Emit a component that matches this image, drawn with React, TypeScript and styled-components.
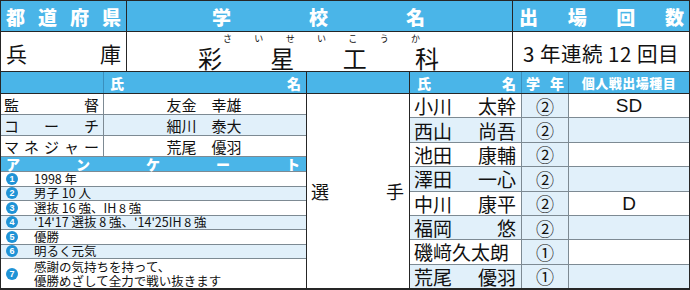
import * as React from "react";
import styled, {createGlobalStyle} from "styled-components";

const BLUE = "#4ab5e8";
const PALE = "#e1f0fa";
const LINE = "#7d8a93";
const DARK = "#262626";

const GlobalStyle = createGlobalStyle`
  html, body { margin: 0; padding: 0; background: #fff; }
  body { font-family: "Noto Sans CJK JP", "Noto Sans", sans-serif; color: #111; }
`

const Sheet = styled.div`
  width: 690px;
  height: 290px;
  box-sizing: border-box;
  border: 1px solid ${DARK};
  border-bottom-width: 2px;
  display: flex;
  flex-direction: column;
  overflow: hidden;
`

const TopRow = styled.div<{h:number, blue?:boolean}>`
  display: grid;
  grid-template-columns: 125px 386px 1fr;
  height: ${p=>p.h}px;
  flex-shrink: 0;
  background: ${p=>p.blue ? BLUE : "#fff"};
  border-bottom: 1px solid ${DARK};
  & > * + * { border-left: 1px solid ${DARK}; }
`

const Spread = styled.div<{pad:string, size:number, bold?:boolean, white?:boolean}>`
  display: flex;
  justify-content: space-between;
  align-items: center;
  padding: ${p=>p.pad};
  font-size: ${p=>p.size}px;
  font-weight: ${p=>p.bold ? 900 : 400};
  color: ${p=>p.white ? "#fff" : "#111"};
  line-height: 1;
  min-width: 0;
  min-height: 0;
`

const SchoolCell = styled.div`
  display: flex;
  flex-direction: column;
`

const Kana = styled(Spread)`
  height: 9px;
  padding-top: 2px;
`

const CountCell = styled.div`
  display: flex;
  align-items: center;
  justify-content: center;
  font-size: 20.5px;
  line-height: 1;
  padding-top: 2px;
  letter-spacing: 0.5px;
`

const Bottom = styled.div`
  flex: 1;
  display: grid;
  grid-template-columns: 305px 103px 1fr;
  grid-template-rows: 100%;
  min-height: 0;
  & > * + * { border-left: 1px solid ${DARK}; }
`

const Column = styled.div`
  display: flex;
  flex-direction: column;
  min-height: 0;
`

const StaffGrid = styled.div<{blue?:boolean, pale?:boolean}>`
  display: grid;
  grid-template-columns: 102px 1fr;
  height: ${p=>p.blue ? 22 : 21}px;
  flex-shrink: 0;
  background: ${p=>p.blue ? BLUE : p.pale ? PALE : "#fff"};
  border-bottom: 1px solid ${p=>p.blue ? DARK : LINE};
  box-sizing: border-box;
  & > * + * { border-left: 1px solid ${p=>p.blue ? "#3a8fbd" : LINE}; }
`

const StaffName = styled.div`
  display: flex;
  align-items: center;
  justify-content: center;
  font-size: 15px;
  line-height: 1;
  padding-right: 2px;
`

const SurveyHead = styled(Spread)`
  height: 15px;
  flex-shrink: 0;
  background: ${BLUE};
  border-bottom: 1px solid ${LINE};
  box-sizing: border-box;
`

const Item = styled.div<{h?:number, pale?:boolean}>`
  display: flex;
  align-items: center;
  flex: ${p=>p.h ? "1" : "none"};
  height: ${p=>p.h ? "auto" : "14.5px"};
  background: ${p=>p.pale ? PALE : "#fff"};
  border-bottom: 1px solid ${LINE};
  box-sizing: border-box;
  font-size: 12.5px;
  line-height: 14px;
  &:last-child { border-bottom: none; }
`

const Num = styled.span`
  width: 12px;
  height: 12px;
  border-radius: 50%;
  background: #1f93d6;
  color: #fff;
  font-size: 9px;
  font-weight: 900;
  font-family: "Liberation Sans", sans-serif;
  display: flex;
  align-items: center;
  justify-content: center;
  margin: 0 16px 0 5px;
  flex-shrink: 0;
`

const HeadBlank = styled.div`
  height: 22px;
  flex-shrink: 0;
  background: ${BLUE};
  border-bottom: 1px solid ${DARK};
  box-sizing: border-box;
`

const PlayerLabel = styled(Spread)`
  flex: 1;
  padding: 0 5px 0 4px;
`

const RosterRow = styled.div<{blue?:boolean, pale?:boolean}>`
  display: grid;
  grid-template-columns: 111px 47px 1fr;
  flex: ${p=>p.blue ? "none" : "1 1 0"};
  height: ${p=>p.blue ? "22px" : "auto"};
  min-height: 0;
  background: ${p=>p.blue ? BLUE : p.pale ? PALE : "#fff"};
  border-bottom: 1px solid ${p=>p.blue ? DARK : LINE};
  box-sizing: border-box;
  &:last-child { border-bottom: none; }
  & > * + * { border-left: 1px solid ${p=>p.blue ? "#3a8fbd" : LINE}; }
`

const Grade = styled.div`
  display: flex;
  align-items: center;
  justify-content: center;
  background: ${PALE};
  font-size: 18px;
  line-height: 1;
`

const Event = styled.div`
  display: flex;
  align-items: center;
  justify-content: center;
  font-family: "Liberation Sans", "Noto Sans", sans-serif;
  font-size: 19px;
  line-height: 1;
`

const EventHead = styled.div`
  display: flex;
  align-items: center;
  justify-content: center;
  color: #fff;
  font-weight: 900;
  font-size: 13px;
  line-height: 1;
  letter-spacing: 0.5px;
`

const chars = (s:string) => Array.from(s).map((c,i)=><span key={i}>{c}</span>)

const staff = [["監督","友金　幸雄"],["コーチ","細川　泰大"],["マネジャー","荒尾　優羽"]]
const survey = ["1998 年","男子 10 人","選抜 16 強、IH 8 強","'14'17 選抜 8 強、'14'25IH 8 強","優勝","明るく元気"]
const players = [
    ["小川","太幹","②","SD"],["西山","尚吾","②",""],["池田","康輔","②",""],["澤田","一心","②",""],
    ["中川","康平","②","D"],["福岡","悠","②",""],["磯﨑久太朗","","①",""],["荒尾","優羽","①",""],
]

export default function App(){
    return(
        <>
            <GlobalStyle/>
            <Sheet>
                <TopRow h={30} blue>
                    <Spread pad="0 5px" size={19} bold white>{chars("都道府県")}</Spread>
                    <Spread pad="0 87px 0 85px" size={19} bold white>{chars("学校名")}</Spread>
                    <Spread pad="0 5px 0 6px" size={19} bold white>{chars("出場回数")}</Spread>
                </TopRow>
                <TopRow h={39}>
                    <Spread pad="2px 5px 0" size={21}>{chars("兵庫")}</Spread>
                    <SchoolCell>
                        <Kana pad="2px 92px 0 96px" size={9}>{chars("さいせいこうか")}</Kana>
                        <Spread pad="3px 73px 2px 71px" size={24} style={{flex:1}}>{chars("彩星工科")}</Spread>
                    </SchoolCell>
                    <CountCell>3 年連続 12 回目</CountCell>
                </TopRow>
                <Bottom>
                    <Column>
                        <StaffGrid blue>
                            <div/>
                            <Spread pad="0 5px 0 6px" size={14} bold white>{chars("氏名")}</Spread>
                        </StaffGrid>
                        {staff.map(([role,name],i)=>(
                            <StaffGrid key={role} pale={i===1}>
                                <Spread pad="0 4px 0 3px" size={15}>{chars(role)}</Spread>
                                <StaffName>{name}</StaffName>
                            </StaffGrid>
                        ))}
                        <SurveyHead pad="0 6px 0 5px" size={14} bold white>{chars("アンケート")}</SurveyHead>
                        {survey.map((t,i)=>(
                            <Item key={i} pale={i%2===1}><Num>{i+1}</Num>{t}</Item>
                        ))}
                        <Item h={1}>
                            <Num>7</Num>
                            <div>感謝の気持ちを持って、<br/>優勝めざして全力で戦い抜きます</div>
                        </Item>
                    </Column>
                    <Column>
                        <HeadBlank/>
                        <PlayerLabel pad="" size={18}>{chars("選手")}</PlayerLabel>
                    </Column>
                    <Column>
                        <RosterRow blue>
                            <Spread pad="0 5px 0 7px" size={14} bold white>{chars("氏名")}</Spread>
                            <Spread pad="0 4px" size={14} bold white>{chars("学年")}</Spread>
                            <EventHead>個人戦出場種目</EventHead>
                        </RosterRow>
                        {players.map(([f,g,gr,ev],i)=>(
                            <RosterRow key={i} pale={i%2===1}>
                                <Spread pad="0 5px 0 4px" size={19}>{g ? <><span>{f}</span><span>{g}</span></> : <span>{f}</span>}</Spread>
                                <Grade>{gr}</Grade>
                                <Event>{ev}</Event>
                            </RosterRow>
                        ))}
                    </Column>
                </Bottom>
            </Sheet>
        </>
    )
}
